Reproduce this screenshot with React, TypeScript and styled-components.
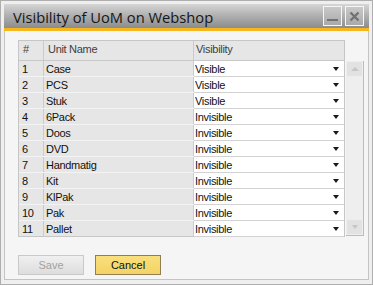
import styled, { createGlobalStyle } from "styled-components";

const GlobalStyle = createGlobalStyle`
  html, body {
    margin: 0;
    padding: 0;
    background: #ffffff;
  }
  * {
    box-sizing: border-box;
  }
`;

const units: [string, string][] = [
  ["Case", "Visible"],
  ["PCS", "Visible"],
  ["Stuk", "Visible"],
  ["6Pack", "Invisible"],
  ["Doos", "Invisible"],
  ["DVD", "Invisible"],
  ["Handmatig", "Invisible"],
  ["Kit", "Invisible"],
  ["KlPak", "Invisible"],
  ["Pak", "Invisible"],
  ["Pallet", "Invisible"],
];

const Window = styled.div`
  width: 373px;
  height: 285px;
  border: 1px solid #aeaeae;
  background: #efefef;
  padding: 3px 3px 4px;
  display: flex;
  flex-direction: column;
  font-family: "Liberation Sans", Arial, sans-serif;
`;

const TitleBar = styled.div`
  height: 24px;
  flex: none;
  display: flex;
  align-items: center;
  padding: 0 5px 0 9px;
  background: linear-gradient(#d6d6d6, #b2b2b2 45%, #8c8c8c);
`;

const Title = styled.div`
  flex: 1;
  padding-top: 2px;
  font-family: "Open Sans", "Liberation Sans", sans-serif;
  font-size: 14.7px;
  line-height: 24px;
  color: #161616;
  white-space: nowrap;
`;

const WinButtons = styled.div`
  display: flex;
  gap: 3px;
`;

const WinButton = styled.div`
  width: 19px;
  height: 20px;
  border: 1px solid #f6f6f6;
  background: linear-gradient(#c9c9c9, #a9a9a9);
  display: flex;
  align-items: center;
  justify-content: center;
`;

const Stripe = styled.div`
  height: 3px;
  flex: none;
  background: #f5b71c;
`;

const Body = styled.div`
  flex: 1;
  border: 1px solid #c4c4c4;
  border-top: none;
  background: #f5f5f5;
  padding: 9px 0 0 13px;
`;

const GridArea = styled.div`
  display: flex;
  align-items: flex-start;
  gap: 1px;
`;

const Table = styled.div`
  width: 327px;
  border: 1px solid #c6c6c6;
  background: #e6e6e6;
`;

const Row = styled.div<{ $header?: boolean; $last?: boolean }>`
  display: grid;
  grid-template-columns: 25px 150px 1fr;
  height: ${(p) => (p.$header ? 20 : p.$last ? 15 : 16)}px;
  border-bottom: ${(p) => (p.$last ? "none" : `1px solid ${p.$header ? "#c8c8c8" : "#f3f3f3"}`)};
`;

const HeadCell = styled.div<{ $pad: number }>`
  display: flex;
  align-items: center;
  padding: 0 0 3px ${(p) => p.$pad}px;
  border-right: 1px solid #cbcbcb;
  font-size: 11px;
  letter-spacing: -0.3px;
  color: #404040;
  &:last-child {
    border-right: none;
  }
`;

const Cell = styled.div<{ $pad: number }>`
  display: flex;
  align-items: center;
  padding-left: ${(p) => p.$pad}px;
  border-right: 1px solid #cbcbcb;
  font-size: 11px;
  letter-spacing: -0.3px;
  color: #111111;
  white-space: nowrap;
`;

const SelectCell = styled.div`
  display: flex;
  align-items: center;
  justify-content: space-between;
  padding: 0 5px 0 1px;
  background: #ffffff;
  box-shadow: 0 1px 0 #d2d2d2;
  font-size: 11px;
  letter-spacing: -0.3px;
  color: #111111;
`;

const Arrow = styled.span<{ $color?: string }>`
  width: 0;
  height: 0;
  border-left: 3.5px solid transparent;
  border-right: 3.5px solid transparent;
  border-top: 4px solid ${(p) => p.$color ?? "#1a1a1a"};
`;

const UpArrow = styled.span`
  width: 0;
  height: 0;
  border-left: 4px solid transparent;
  border-right: 4px solid transparent;
  border-bottom: 4px solid #c6c6c6;
`;

const Scrollbar = styled.div`
  width: 18px;
  height: 175px;
  margin-top: 21px;
  padding: 1px;
  background: #eeeeee;
  border-right: 1px solid #bcbcbc;
  border-bottom: 1px solid #bcbcbc;
  display: flex;
  flex-direction: column;
  justify-content: space-between;
`;

const ScrollButton = styled.div`
  height: 14px;
  background: #e2e2e2;
  display: flex;
  align-items: center;
  justify-content: center;
`;

const ButtonRow = styled.div`
  display: flex;
  gap: 11px;
  margin-top: 18px;
`;

const Button = styled.button<{ $primary?: boolean }>`
  width: 66px;
  height: 20px;
  padding: 0;
  font-family: "Liberation Sans", Arial, sans-serif;
  font-size: 11px;
  border: 1px solid ${(p) => (p.$primary ? "#8f7f52" : "#c9c9c9")};
  color: ${(p) => (p.$primary ? "#111111" : "#a2a2a2")};
  background: ${(p) =>
    p.$primary
      ? "linear-gradient(#f9df7d, #f4d363)"
      : "linear-gradient(#f0f0f0, #dddddd)"};
`;

export default function App() {
  return (
    <>
      <GlobalStyle />
      <Window>
        <TitleBar>
          <Title>Visibility of UoM on Webshop</Title>
          <WinButtons>
            <WinButton>
              <svg width="11" height="14" viewBox="0 0 11 14">
                <rect x="0" y="10" width="11" height="2" fill="#727272" />
              </svg>
            </WinButton>
            <WinButton>
              <svg width="11" height="11" viewBox="0 0 11 11">
                <path
                  d="M1.5 1.5 L9.5 9.5 M9.5 1.5 L1.5 9.5"
                  stroke="#727272"
                  strokeWidth="2.4"
                />
              </svg>
            </WinButton>
          </WinButtons>
        </TitleBar>
        <Stripe />
        <Body>
          <GridArea>
            <Table>
              <Row $header>
                <HeadCell $pad={4}>#</HeadCell>
                <HeadCell $pad={4}>Unit Name</HeadCell>
                <HeadCell $pad={2}>Visibility</HeadCell>
              </Row>
              {units.map(([name, vis], i) => (
                <Row key={name} $last={i === units.length - 1}>
                  <Cell $pad={3}>{i + 1}</Cell>
                  <Cell $pad={2}>{name}</Cell>
                  <SelectCell>
                    {vis}
                    <Arrow />
                  </SelectCell>
                </Row>
              ))}
            </Table>
            <Scrollbar>
              <ScrollButton>
                <UpArrow />
              </ScrollButton>
              <ScrollButton>
                <Arrow $color="#c6c6c6" />
              </ScrollButton>
            </Scrollbar>
          </GridArea>
          <ButtonRow>
            <Button disabled>Save</Button>
            <Button $primary>Cancel</Button>
          </ButtonRow>
        </Body>
      </Window>
    </>
  );
}
